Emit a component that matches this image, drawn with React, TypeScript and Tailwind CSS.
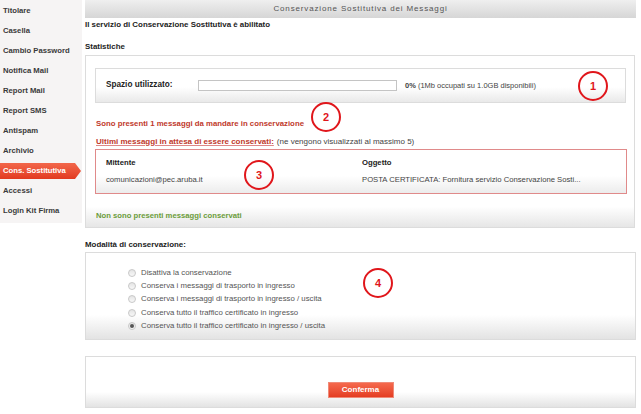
import React from "react";

const items = [
  "Titolare",
  "Casella",
  "Cambio Password",
  "Notifica Mail",
  "Report Mail",
  "Report SMS",
  "Antispam",
  "Archivio",
  "Cons. Sostitutiva",
  "Accessi",
  "Login Kit Firma",
];

function Mark({ n, className }: { n: string; className: string }) {
  return (
    <div
      className={`absolute w-[30px] h-[30px] rounded-full border-2 border-[#e0161b] flex items-center justify-center text-[#e0161b] font-bold text-[11px] ${className}`}
    >
      {n}
    </div>
  );
}

function Radio({ checked }: { checked?: boolean }) {
  return (
    <span className="w-[8px] h-[8px] rounded-full border border-[#c8c8c8] bg-gradient-to-b from-[#e4e4e4] to-[#f8f8f8] flex items-center justify-center shrink-0">
      {checked && <span className="w-[4px] h-[4px] rounded-full bg-[#555]" />}
    </span>
  );
}

const radios = [
  "Disattiva la conservazione",
  "Conserva i messaggi di trasporto in ingresso",
  "Conserva i messaggi di trasporto in ingresso / uscita",
  "Conserva tutto il traffico certificato in ingresso",
  "Conserva tutto il traffico certificato in ingresso / uscita",
];

export default function App() {
  return (
    <div
      className="w-[641px] h-[414px] bg-white flex items-start overflow-hidden text-[#333]"
      style={{ fontFamily: '"Liberation Sans", Arial, sans-serif' }}
    >
      {/* Sidebar */}
      <div className="w-[82px] h-[223px] bg-[#f6f4f4] pt-[1px] flex flex-col shrink-0">
        {items.map((it) => {
          const active = it === "Cons. Sostitutiva";
          return (
            <div key={it} className="h-[20px] flex items-center">
              {active ? (
                <div className="w-[81px] h-[16px] flex items-center pl-[3px] text-white font-bold text-[7.7px] bg-gradient-to-b from-[#f2664a] to-[#e2391f] [clip-path:polygon(0_0,calc(100%-6px)_0,100%_50%,calc(100%-6px)_100%,0_100%)]">
                  {it}
                </div>
              ) : (
                <div className="pl-[3px] font-bold text-[7.7px] text-[#3a3a3a]">{it}</div>
              )}
            </div>
          );
        })}
      </div>

      {/* Main */}
      <div className="ml-[3px] w-[551px] flex flex-col">
        <div className="h-[18px] bg-gradient-to-b from-[#efefef] to-[#d6d6d6] flex items-center justify-center text-[8px] tracking-[0.85px] text-[#555]">
          Conservazione Sostitutiva dei Messaggi
        </div>
        <div className="h-[13px] flex items-center text-[7.9px] font-bold text-[#222]">
          Il servizio di Conservazione Sostitutiva è abilitato
        </div>
        <div className="h-[24px] flex items-end pb-[2px] text-[7.9px] font-bold text-[#222]">
          Statistiche
        </div>

        {/* Stats panel */}
        <div className="h-[173px] border border-[#dcdcdc] bg-gradient-to-b from-white from-[88%] to-[#e6e6e6] flex flex-col px-[9px] pt-[12px] w-[550px]">
          <div className="relative h-[35px] w-[531px] border border-[#dcdcdc] bg-gradient-to-b from-white from-[55%] to-[#e9e9e9] flex items-center">
            <div className="w-[102px] pl-[10px] text-[8.2px] font-bold text-[#222]">Spazio utilizzato:</div>
            <div className="w-[199px] h-[11px] border border-[#c4c4c4] bg-white" />
            <div className="ml-[8px] text-[7.5px] text-[#444]">
              <span className="font-bold">0%</span> (1Mb occupati su 1.0GB disponibili)
            </div>
            <Mark n="1" className="left-[482px] top-[2px]" />
          </div>

          <div className="relative h-[21px] mt-[10px] flex items-center pl-[1px] text-[7.8px] text-[#c0392b] font-bold">
            Sono presenti 1 messaggi da mandare in conservazione
            <Mark n="2" className="left-[216px] top-[-11px]" />
          </div>
          <div className="h-[15px] flex items-center pl-[1px] text-[8px]">
            <span className="text-[#c0392b] font-bold underline decoration-[#d88]">
              Ultimi messaggi in attesa di essere conservati:
            </span>
            <span className="ml-[3px] text-[#444]">(ne vengono visualizzati al massimo 5)</span>
          </div>

          <div className="relative h-[45px] w-[532px] border border-[#e08a8a] bg-gradient-to-b from-white from-[60%] to-[#ececec] flex flex-col justify-center pl-[10px] gap-[5px] text-[7.7px]">
            <div className="flex">
              <span className="w-[256px] font-bold text-[#222]">Mittente</span>
              <span className="font-bold text-[#222]">Oggetto</span>
            </div>
            <div className="flex text-[#444]">
              <span className="w-[256px]">comunicazioni@pec.aruba.it</span>
              <span>POSTA CERTIFICATA: Fornitura servizio Conservazione Sosti...</span>
            </div>
            <Mark n="3" className="left-[148px] top-[10px]" />
          </div>

          <div className="h-[16px] mt-[14px] flex items-center pl-[1px] text-[7.7px] font-bold text-[#6b9c3a]">
            Non sono presenti messaggi conservati
          </div>
        </div>

        <div className="h-[24px] flex items-end pb-[1px] text-[7.9px] font-bold text-[#222]">
          Modalità di conservazione:
        </div>

        {/* Modes panel */}
        <div className="relative h-[88px] w-[551px] border border-[#dcdcdc] bg-gradient-to-b from-white from-[72%] to-[#e3e3e3] flex flex-col pl-[42px] pt-[13px]">
          {radios.map((r, i) => (
            <div key={r} className="h-[13.3px] flex items-center gap-[5px] text-[7.8px] text-[#555]">
              <Radio checked={i === 4} />
              <span>{r}</span>
            </div>
          ))}
          <Mark n="4" className="left-[277px] top-[15px]" />
        </div>

        {/* Confirm panel */}
        <div className="mt-[16px] h-[52px] w-[551px] border border-[#dcdcdc] bg-gradient-to-b from-white from-[70%] to-[#e3e3e3] flex items-center justify-center">
          <div className="mt-[16px] w-[66px] h-[16px] border border-[#f08a78] bg-gradient-to-b from-[#f5694d] to-[#e43c22] flex items-center justify-center text-white font-bold text-[8px]">
            Conferma
          </div>
        </div>
      </div>
    </div>
  );
}
